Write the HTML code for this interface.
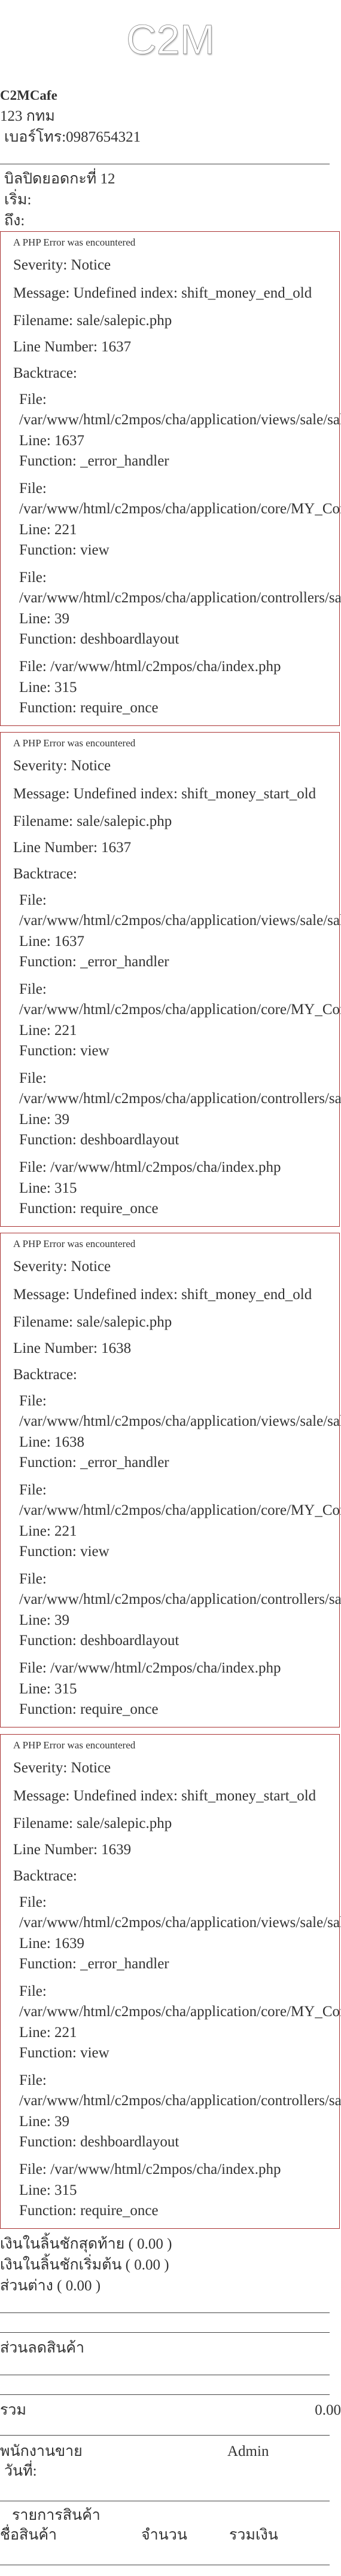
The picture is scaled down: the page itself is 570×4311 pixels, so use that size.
<!DOCTYPE html>
<html><head><meta charset="utf-8"><style>
html,body{margin:0;padding:0;background:#fff;}
body{width:570px;height:4311px;position:relative;overflow:hidden;font-family:"Liberation Serif","DejaVu Sans",serif;color:#333;font-size:25px;}
.a{position:absolute;white-space:nowrap;line-height:30px;height:30px;}
.hr{position:absolute;left:0;width:551px;height:0;border-top:1.5px solid #444;}
.box{position:absolute;left:0;width:566px;height:826px;border:1px solid #a33;}
.box .a{left:21px;}
.box .b{left:31px;}
.box .h{font-size:17px;}
.logo{position:absolute;left:0;width:570px;top:28px;text-align:center;font-family:"Liberation Sans",sans-serif;font-size:70px;line-height:76px;color:#fff;-webkit-text-stroke:0.7px #777;text-shadow:1px 2px 2px #bbb;}
.th{font-family:"Liberation Serif","DejaVu Sans",sans-serif;}
</style></head><body>
<div class="logo">C2M</div>
<div class="a" style="top:145px;left:0;font-weight:bold;font-size:23px;">C2MCafe</div>
<div class="a th" style="top:180px;left:0;">123 กทม</div>
<div class="a th" style="top:215px;left:7px;">เบอร์โทร:0987654321</div>
<div class="hr" style="top:274px;"></div>
<div class="a th" style="top:285px;left:7px;">บิลปิดยอดกะที่ 12</div>
<div class="a th" style="top:320px;left:7px;">เริ่ม:</div>
<div class="a th" style="top:355px;left:7px;">ถึง:</div>

<div class="box" style="top:387px;">
<div class="a h" style="top:3px;">A PHP Error was encountered</div>
<div class="a" style="top:41px;">Severity: Notice</div>
<div class="a" style="top:88px;">Message: Undefined index: shift_money_end_old</div>
<div class="a" style="top:134px;">Filename: sale/salepic.php</div>
<div class="a" style="top:178px;">Line Number: 1637</div>
<div class="a" style="top:222px;">Backtrace:</div>
<div class="a b" style="top:266px;">File:</div>
<div class="a b" style="top:300px;">/var/www/html/c2mpos/cha/application/views/sale/salepic.php</div>
<div class="a b" style="top:335px;">Line: 1637</div>
<div class="a b" style="top:369px;">Function: _error_handler</div>
<div class="a b" style="top:415px;">File:</div>
<div class="a b" style="top:449px;">/var/www/html/c2mpos/cha/application/core/MY_Controller.php</div>
<div class="a b" style="top:484px;">Line: 221</div>
<div class="a b" style="top:518px;">Function: view</div>
<div class="a b" style="top:564px;">File:</div>
<div class="a b" style="top:598px;">/var/www/html/c2mpos/cha/application/controllers/sale.php</div>
<div class="a b" style="top:633px;">Line: 39</div>
<div class="a b" style="top:667px;">Function: deshboardlayout</div>
<div class="a b" style="top:713px;">File: /var/www/html/c2mpos/cha/index.php</div>
<div class="a b" style="top:748px;">Line: 315</div>
<div class="a b" style="top:782px;">Function: require_once</div>
</div>

<div class="box" style="top:1225px;">
<div class="a h" style="top:3px;">A PHP Error was encountered</div>
<div class="a" style="top:41px;">Severity: Notice</div>
<div class="a" style="top:88px;">Message: Undefined index: shift_money_start_old</div>
<div class="a" style="top:134px;">Filename: sale/salepic.php</div>
<div class="a" style="top:178px;">Line Number: 1637</div>
<div class="a" style="top:222px;">Backtrace:</div>
<div class="a b" style="top:266px;">File:</div>
<div class="a b" style="top:300px;">/var/www/html/c2mpos/cha/application/views/sale/salepic.php</div>
<div class="a b" style="top:335px;">Line: 1637</div>
<div class="a b" style="top:369px;">Function: _error_handler</div>
<div class="a b" style="top:415px;">File:</div>
<div class="a b" style="top:449px;">/var/www/html/c2mpos/cha/application/core/MY_Controller.php</div>
<div class="a b" style="top:484px;">Line: 221</div>
<div class="a b" style="top:518px;">Function: view</div>
<div class="a b" style="top:564px;">File:</div>
<div class="a b" style="top:598px;">/var/www/html/c2mpos/cha/application/controllers/sale.php</div>
<div class="a b" style="top:633px;">Line: 39</div>
<div class="a b" style="top:667px;">Function: deshboardlayout</div>
<div class="a b" style="top:713px;">File: /var/www/html/c2mpos/cha/index.php</div>
<div class="a b" style="top:748px;">Line: 315</div>
<div class="a b" style="top:782px;">Function: require_once</div>
</div>

<div class="box" style="top:2063px;">
<div class="a h" style="top:3px;">A PHP Error was encountered</div>
<div class="a" style="top:41px;">Severity: Notice</div>
<div class="a" style="top:88px;">Message: Undefined index: shift_money_end_old</div>
<div class="a" style="top:134px;">Filename: sale/salepic.php</div>
<div class="a" style="top:178px;">Line Number: 1638</div>
<div class="a" style="top:222px;">Backtrace:</div>
<div class="a b" style="top:266px;">File:</div>
<div class="a b" style="top:300px;">/var/www/html/c2mpos/cha/application/views/sale/salepic.php</div>
<div class="a b" style="top:335px;">Line: 1638</div>
<div class="a b" style="top:369px;">Function: _error_handler</div>
<div class="a b" style="top:415px;">File:</div>
<div class="a b" style="top:449px;">/var/www/html/c2mpos/cha/application/core/MY_Controller.php</div>
<div class="a b" style="top:484px;">Line: 221</div>
<div class="a b" style="top:518px;">Function: view</div>
<div class="a b" style="top:564px;">File:</div>
<div class="a b" style="top:598px;">/var/www/html/c2mpos/cha/application/controllers/sale.php</div>
<div class="a b" style="top:633px;">Line: 39</div>
<div class="a b" style="top:667px;">Function: deshboardlayout</div>
<div class="a b" style="top:713px;">File: /var/www/html/c2mpos/cha/index.php</div>
<div class="a b" style="top:748px;">Line: 315</div>
<div class="a b" style="top:782px;">Function: require_once</div>
</div>

<div class="box" style="top:2902px;">
<div class="a h" style="top:3px;">A PHP Error was encountered</div>
<div class="a" style="top:41px;">Severity: Notice</div>
<div class="a" style="top:88px;">Message: Undefined index: shift_money_start_old</div>
<div class="a" style="top:134px;">Filename: sale/salepic.php</div>
<div class="a" style="top:178px;">Line Number: 1639</div>
<div class="a" style="top:222px;">Backtrace:</div>
<div class="a b" style="top:266px;">File:</div>
<div class="a b" style="top:300px;">/var/www/html/c2mpos/cha/application/views/sale/salepic.php</div>
<div class="a b" style="top:335px;">Line: 1639</div>
<div class="a b" style="top:369px;">Function: _error_handler</div>
<div class="a b" style="top:415px;">File:</div>
<div class="a b" style="top:449px;">/var/www/html/c2mpos/cha/application/core/MY_Controller.php</div>
<div class="a b" style="top:484px;">Line: 221</div>
<div class="a b" style="top:518px;">Function: view</div>
<div class="a b" style="top:564px;">File:</div>
<div class="a b" style="top:598px;">/var/www/html/c2mpos/cha/application/controllers/sale.php</div>
<div class="a b" style="top:633px;">Line: 39</div>
<div class="a b" style="top:667px;">Function: deshboardlayout</div>
<div class="a b" style="top:713px;">File: /var/www/html/c2mpos/cha/index.php</div>
<div class="a b" style="top:748px;">Line: 315</div>
<div class="a b" style="top:782px;">Function: require_once</div>
</div>

<div class="a th" style="top:3741px;left:0;">เงินในลิ้นชักสุดท้าย ( 0.00 )</div>
<div class="a th" style="top:3776px;left:0;">เงินในลิ้นชักเริ่มต้น ( 0.00 )</div>
<div class="a th" style="top:3811px;left:0;">ส่วนต่าง ( 0.00 )</div>
<div class="hr" style="top:3870px;"></div>
<div class="hr" style="top:3903px;"></div>
<div class="a th" style="top:3915px;left:0;">ส่วนลดสินค้า</div>
<div class="hr" style="top:3974px;"></div>
<div class="hr" style="top:4007px;"></div>
<div class="a th" style="top:4019px;left:0;">รวม</div>
<div class="a" style="top:4019px;right:0;">0.00</div>
<div class="hr" style="top:4075px;"></div>
<div class="a th" style="top:4088px;left:0;">พนักงานขาย</div>
<div class="a" style="top:4088px;left:380px;">Admin</div>
<div class="a th" style="top:4121px;left:7px;">วันที่:</div>
<div class="hr" style="top:4185px;"></div>
<div class="a th" style="top:4195px;left:20px;">รายการสินค้า</div>
<div class="a th" style="top:4228px;left:0;">ชื่อสินค้า</div>
<div class="a th" style="top:4228px;left:236px;">จำนวน</div>
<div class="a th" style="top:4228px;left:383px;">รวมเงิน</div>
<div class="hr" style="top:4292px;"></div>
</body></html>
